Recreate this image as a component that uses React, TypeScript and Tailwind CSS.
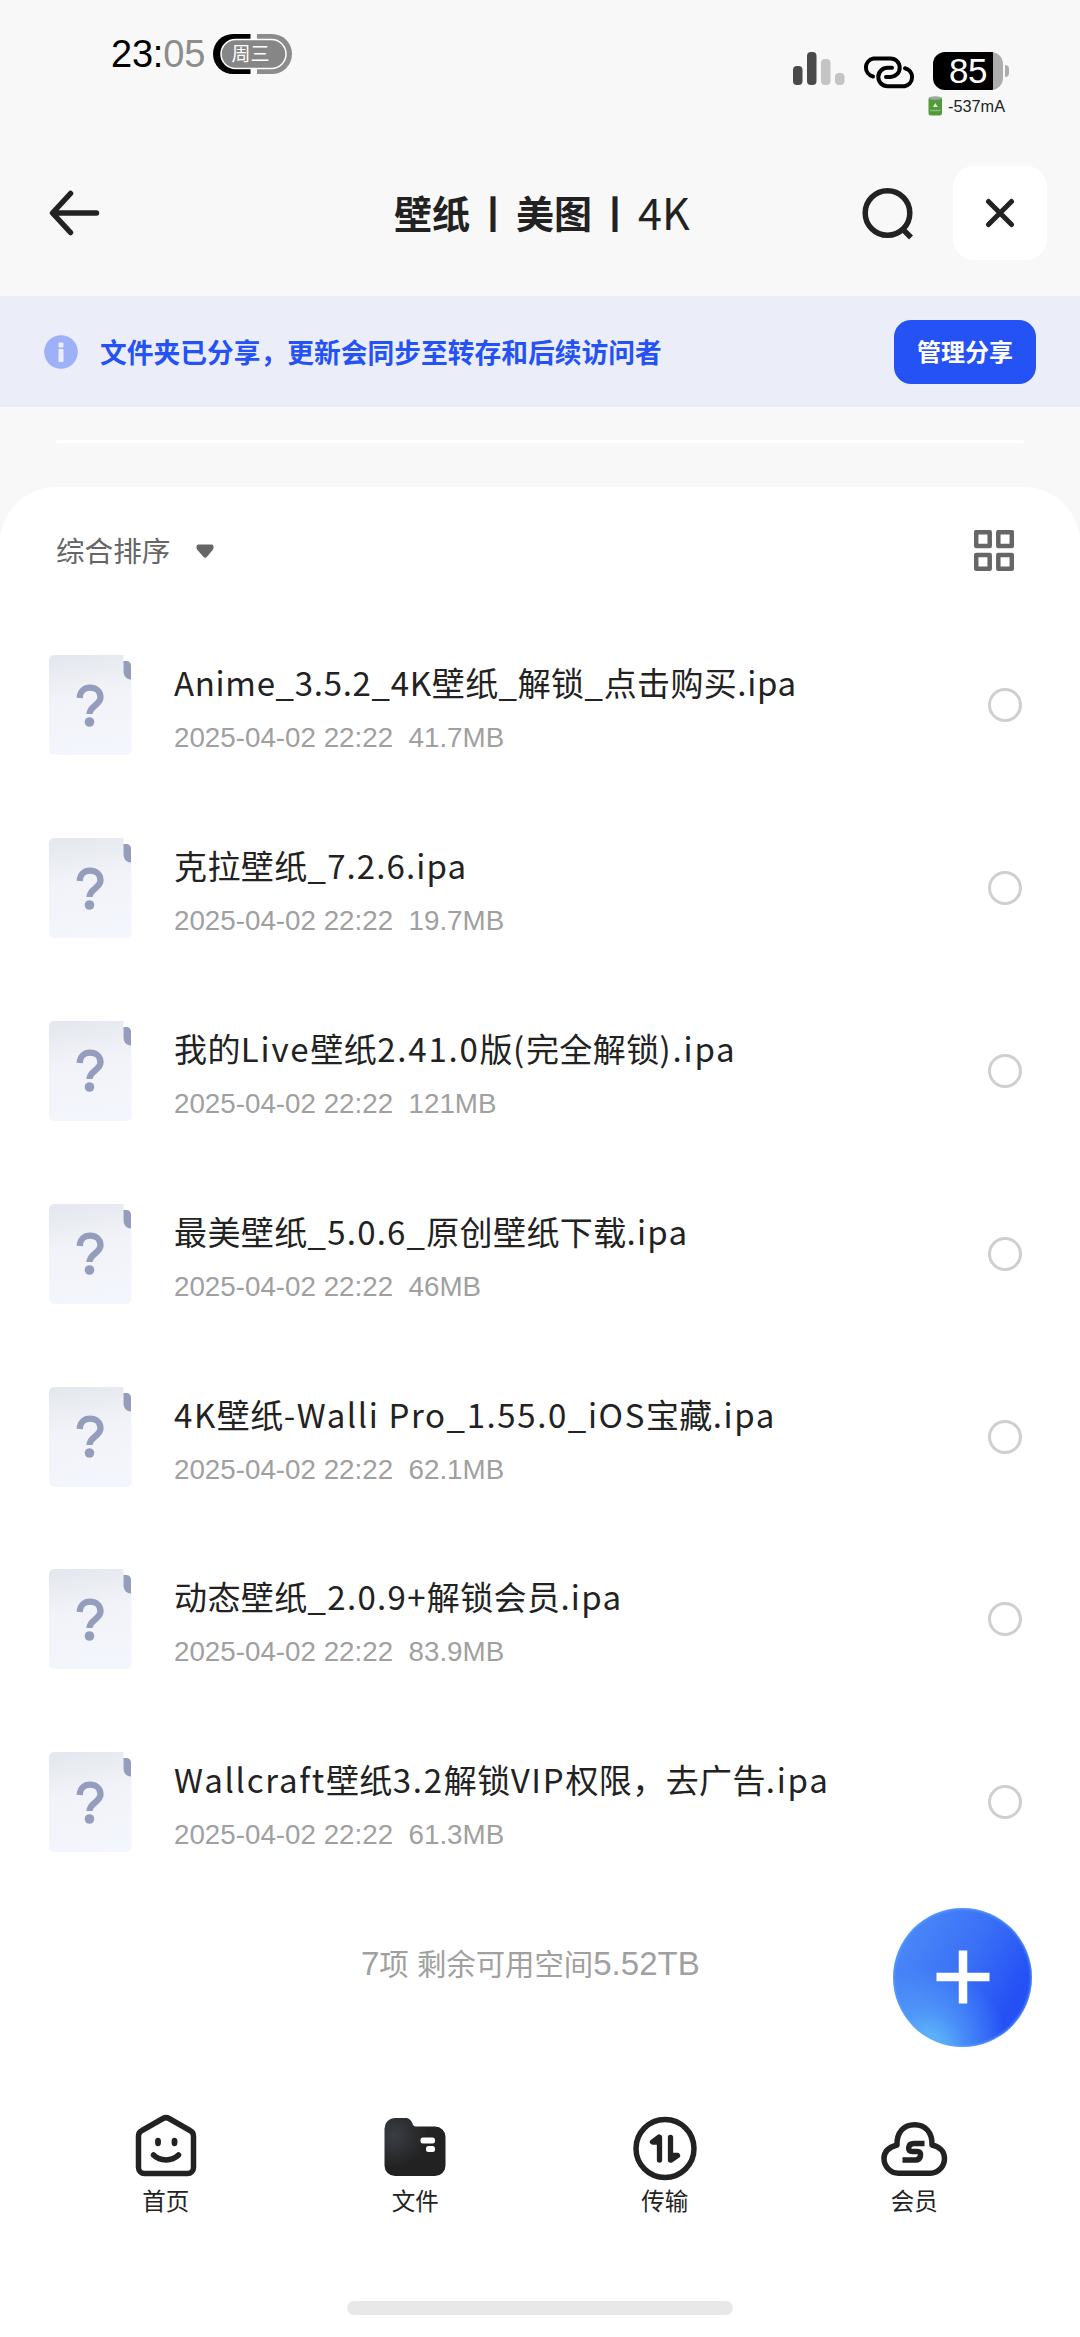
import type { ReactNode } from "react";

type FileItem = {
  name: string;
  date: string;
  size: string;
  tracking: string;
};

const files: FileItem[] = [
  { name: "Anime_3.5.2_4K壁纸_解锁_点击购买.ipa", date: "2025-04-02 22:22", size: "41.7MB", tracking: "tracking-[0.7px]" },
  { name: "克拉壁纸_7.2.6.ipa", date: "2025-04-02 22:22", size: "19.7MB", tracking: "tracking-[1.1px]" },
  { name: "我的Live壁纸2.41.0版(完全解锁).ipa", date: "2025-04-02 22:22", size: "121MB", tracking: "tracking-[1.8px]" },
  { name: "最美壁纸_5.0.6_原创壁纸下载.ipa", date: "2025-04-02 22:22", size: "46MB", tracking: "tracking-[1.2px]" },
  { name: "4K壁纸-Walli Pro_1.55.0_iOS宝藏.ipa", date: "2025-04-02 22:22", size: "62.1MB", tracking: "tracking-[1.6px]" },
  { name: "动态壁纸_2.0.9+解锁会员.ipa", date: "2025-04-02 22:22", size: "83.9MB", tracking: "tracking-[1.3px]" },
  { name: "Wallcraft壁纸3.2解锁VIP权限，去广告.ipa", date: "2025-04-02 22:22", size: "61.3MB", tracking: "tracking-[1.75px]" },
];

function StatusBar() {
  return (
    <div className="flex h-[148px] items-start justify-between pl-[111px] pr-[71px] font-['Liberation_Sans','Noto_Sans_CJK_SC',sans-serif]">
      <div className="flex items-center pt-[34px]">
        <span className="w-[102px] text-[38px] leading-10 tracking-[-0.2px] text-black">
          23:<span className="text-[#8c8c8c]">05</span>
        </span>
        <div className="relative flex h-10 w-[79px] items-center justify-center">
          <svg className="absolute inset-0" width="79" height="40" viewBox="0 0 79 40" fill="none">
            <path d="M37.5 0H20a20 20 0 0 0 0 40h17.5z" fill="#000" />
            <path d="M44 0h15a20 20 0 0 1 0 40H44z" fill="#8c8c8c" />
            <rect x="8" y="5.5" width="65" height="29" rx="14.5" fill="#868686" stroke="#fff" strokeWidth="1.5" />
          </svg>
          <span className="relative pr-1 text-[19px] leading-none text-white">周三</span>
        </div>
      </div>

      <div className="flex items-start pt-[52px]">
        <svg width="54" height="34" viewBox="0 0 54 34">
          <rect x="2" y="14" width="9.5" height="19" rx="4" fill="#4a4a4a" />
          <rect x="16" y="0" width="9.5" height="33" rx="4" fill="#4a4a4a" />
          <rect x="30" y="7" width="9.5" height="26" rx="4" fill="#c4c4c4" />
          <rect x="44" y="21" width="9.5" height="12" rx="4" fill="#c4c4c4" />
        </svg>
        <svg className="ml-[17px] mt-1" width="54" height="33" viewBox="0 0 54 33" fill="none" stroke="#000" strokeWidth="4" strokeLinecap="round">
          <path d="M11 20.500A9.200 9.200 0 0 1 11.500 2.500h17a9.200 9.200 0 0 1 0 18.400h-4.500" />
          <path d="M43 12.200a9.200 9.200 0 0 1-.500 18h-17a9.200 9.200 0 0 1 0-18.400h4.500" />
        </svg>
        <div className="ml-[9px] flex flex-col">
          <div className="flex items-center pl-[8px]">
            <div className="flex h-[38px] w-[70px] items-center justify-center overflow-hidden rounded-[12px] bg-[linear-gradient(90deg,#000_60px,#adadad_60px)] text-[35px] tracking-[-0.5px] text-white">
              85
            </div>
            <div className="ml-0.5 h-3 w-1 rounded-r-full bg-[#adadad]" />
          </div>
          <div className="mt-[6px] flex items-center">
            <svg className="ml-[3px]" width="15" height="20" viewBox="0 0 15 20">
              <rect x="0.500" y="1" width="13.500" height="18.500" rx="2.500" fill="#549a3c" />
              <ellipse cx="7.300" cy="2" rx="6.500" ry="1.700" fill="#9aa9a4" />
              <path d="M2 14.500h10.500" stroke="#86bd72" strokeWidth="1.500" />
              <path d="M7.300 7l2.500 4h-5z" fill="#d9ecd0" />
            </svg>
            <span className="ml-[5px] text-[16.3px] leading-[20px] text-[#222]">-537mA</span>
          </div>
        </div>
      </div>
    </div>
  );
}

function Header() {
  return (
    <header className="flex h-[148px] items-start pl-[49px] pr-[33px] pt-[18px]">
      <div className="flex h-[94px] w-full items-center">
        <svg width="52" height="48" viewBox="0 0 52 48" fill="none" stroke="#222" strokeWidth="5.500" strokeLinecap="round" strokeLinejoin="round">
          <path d="M21.500 4.500L3.500 24l18 19.500M4 24h43.500" />
        </svg>
        <h1 className="mb-[3px] ml-[293px] flex items-center whitespace-nowrap text-[38px] font-bold leading-none text-[#222]">
          <span>壁纸</span>
          <span className="w-[46px] text-center">丨</span>
          <span>美图</span>
          <span className="w-[46px] text-center">丨</span>
          <span className="text-[43px] font-normal">4K</span>
        </h1>
        <svg className="ml-auto mr-[38px]" width="54" height="54" viewBox="0 0 54 54" fill="none" stroke="#222" strokeWidth="5.500">
          <circle cx="26.500" cy="27" r="22.300" />
          <path d="M42 43.500l8 8" />
        </svg>
        <button className="flex size-[94px] items-center justify-center rounded-[21px] bg-white">
          <svg width="30" height="30" viewBox="0 0 30 30" stroke="#222" strokeWidth="5" strokeLinecap="round">
            <path d="M3.500 3.500l23 23M26.500 3.500l-23 23" />
          </svg>
        </button>
      </div>
    </header>
  );
}

function ShareBanner() {
  return (
    <div className="flex h-[111px] items-center bg-[#ebeef9] pl-[44px] pr-[44px]">
      <svg width="34" height="34" viewBox="0 0 34 34">
        <circle cx="17" cy="17" r="16.800" fill="#9db0f8" />
        <rect x="14.500" y="7.500" width="5" height="5" rx="1" fill="#ebeef9" />
        <rect x="14.500" y="14" width="5" height="13" rx="1" fill="#ebeef9" />
      </svg>
      <p className="ml-[22px] pt-px text-[26.75px] font-bold leading-none text-[#2452f5]">
        文件夹已分享，更新会同步至转存和后续访问者
      </p>
      <button className="ml-auto flex h-[64px] w-[142px] items-center justify-center rounded-[17px] bg-[#2452f5] pb-0.5 text-[24px] font-bold leading-none text-white">
        管理分享
      </button>
    </div>
  );
}

function FileIcon() {
  return (
    <div className="relative flex h-[100px] w-[83px] shrink-0 items-center justify-center">
      <svg className="absolute inset-0" width="83" height="100" viewBox="0 0 83 100">
        <defs>
          <linearGradient id="paper" x1="0.400" y1="0" x2="0.550" y2="1">
            <stop offset="0" stopColor="#e5e8ee" />
            <stop offset="0.400" stopColor="#f1f3f8" />
            <stop offset="1" stopColor="#f4f6fd" />
          </linearGradient>
        </defs>
        <path d="M5 0h69.500v16c0 5 3 8 8 8.500V95a5 5 0 0 1-5 5H5a5 5 0 0 1-5-5V5a5 5 0 0 1 5-5z" fill="url(#paper)" />
        <path d="M74.500 6h3a4.500 4.500 0 0 1 4.500 4.500v14c-5-.500-7.500-3.500-7.500-8.500z" fill="#949dbc" />
      </svg>
      <svg className="relative mr-0.5" width="28" height="43" viewBox="0 0 28 43" fill="none">
        <path d="M3.700 14C4 7 8.500 3.700 14 3.700s10.500 3.300 10.500 9.600c0 7.700-11 8.700-11 16.700" stroke="#949dbc" strokeWidth="6.300" />
        <circle cx="13.500" cy="38" r="4.800" fill="#949dbc" />
      </svg>
    </div>
  );
}

// Latin runs are set looser than the CJK glyphs around them
function FileName({ name, tracking }: { name: string; tracking: string }) {
  return (
    <p className="whitespace-pre text-[33px] leading-[44px] tracking-[0.4px] text-[#222]">
      {name.split(/([\x20-\x7e]+)/).map((part, i) => (
        <span key={i} className={i % 2 ? tracking : ""}>
          {part}
        </span>
      ))}
    </p>
  );
}

function FileRow({ file }: { file: FileItem }) {
  return (
    <li className="flex h-[182.8px] items-center pl-[49px] pr-[58px]">
      <FileIcon />
      <div className="ml-[42px] flex flex-col pt-[5px]">
        <FileName name={file.name} tracking={file.tracking} />
        <p className="mt-[17px] whitespace-pre font-['Liberation_Sans',sans-serif] text-[27.75px] leading-[34px] text-[#a0a0a0]">
          {file.date}  {file.size}
        </p>
      </div>
      <span className="ml-auto size-[34px] rounded-full border-3 border-[#cfcfcf]" />
    </li>
  );
}

function NavItem({ label, children }: { label: string; children: ReactNode }) {
  return (
    <a className="flex flex-1 flex-col items-center text-[#222]">
      <svg className="overflow-visible" width="68" height="68" viewBox="0 0 68 68" fill="none">
        {children}
      </svg>
      <span className="mt-[5.5px] text-[23.5px] leading-[30px]">{label}</span>
    </a>
  );
}

function TabBar() {
  return (
    <nav className="flex px-[41px]">
      <NavItem label="首页">
        <path
          d="M31 6.500a6 6 0 0 1 6 0L58 18.500a6 6 0 0 1 3.500 5.500v31.500a6 6 0 0 1-6 6h-43a6 6 0 0 1-6-6V24A6 6 0 0 1 10 18.500z"
          stroke="#222"
          strokeWidth="5.500"
        />
        <path d="M21.500 43c6.500 6.500 18.500 6.500 25 0" stroke="#222" strokeWidth="5.500" strokeLinecap="round" />
        <ellipse cx="26" cy="30" rx="3" ry="4.200" fill="#222" />
        <ellipse cx="42.500" cy="30" rx="3" ry="4.200" fill="#222" />
      </NavItem>
      <NavItem label="文件">
        <defs>
          <radialGradient id="folder" cx="0.150" cy="0.300" r="0.550">
            <stop offset="0" stopColor="#3a3e45" />
            <stop offset="1" stopColor="#222" />
          </radialGradient>
        </defs>
        <path
          d="M3.500 16.500A10.500 10.500 0 0 1 14 6h10c4 0 6 2 7.500 5.500.800 2.200 1.500 3 3.500 3h19A10.500 10.500 0 0 1 64.500 25v28.500A10.500 10.500 0 0 1 54 64H14A10.500 10.500 0 0 1 3.500 53.500z"
          fill="url(#folder)"
        />
        <rect x="39.500" y="25.500" width="14.500" height="6" rx="2.500" fill="#fff" />
        <rect x="45" y="34" width="9" height="6" rx="2.500" fill="#fff" />
      </NavItem>
      <NavItem label="传输">
        <circle cx="34" cy="36.500" r="29" stroke="#222" strokeWidth="5.500" />
        <path
          d="M28.500 25.500v22.500M28 25l-6.500 5h6M39.500 25.500v22.500M40 48l6.500-4.500h-6"
          stroke="#222"
          strokeWidth="5.300"
          strokeLinecap="round"
          strokeLinejoin="round"
        />
      </NavItem>
      <NavItem label="会员">
        <path
          d="M17 33C16.500 20 24 12.700 34.500 12.700S52.500 20 52 33C59 34.500 64.500 39 64.500 46.500S58.500 61.200 50.500 61.200h-32C10.500 61.200 4 54.500 4 46.500S9.500 35 17 33z"
          stroke="#222"
          strokeWidth="5.500"
          strokeLinejoin="round"
        />
        <path d="M44.500 31.500H34c-3.500 0-5 1.200-5.300 4-.300 2.800.800 4 3.800 4h4.500c3 0 3.900 1.200 3.500 4-.400 2.900-1.900 4.500-5 4.500H22.500" stroke="#222" strokeWidth="5.500" />
      </NavItem>
    </nav>
  );
}

export default function App() {
  return (
    <main className="flex h-[2337px] w-[1080px] flex-col overflow-hidden bg-[#f8f8f8] font-['Noto_Sans_CJK_SC',sans-serif]">
      <StatusBar />
      <Header />
      <ShareBanner />
      <div className="mx-[56px] mt-[33px] h-[3px] rounded-full bg-white" />

      <section className="mt-[44px] flex grow flex-col rounded-t-[56px] bg-white">
        <div className="flex h-[127px] items-center pl-[56px] pr-[66px]">
          <span className="text-[28.6px] leading-none text-[#666]">综合排序</span>
          <svg className="ml-[26px]" width="18" height="14" viewBox="0 0 18 14" fill="#666">
            <path d="M2.500 0.500h13a2 2 0 0 1 2 2v1.500a3 3 0 0 1-.700 1.800l-6 7.200a2 2 0 0 1-3.200 0L1.200 5.800A3 3 0 0 1 .500 4V2.500a2 2 0 0 1 2-2z" />
          </svg>
          <svg className="ml-auto" width="40" height="41" viewBox="0 0 40 41" fill="none" stroke="#666" strokeWidth="4.500" strokeLinejoin="round">
            <rect x="2.200" y="2.200" width="13.500" height="13.700" />
            <rect x="24.300" y="2.200" width="13.500" height="13.700" />
            <rect x="2.200" y="25" width="13.500" height="13.700" />
            <rect x="24.300" y="25" width="13.500" height="13.700" />
          </svg>
        </div>

        <ul>
          {files.map((file) => (
            <FileRow key={file.name} file={file} />
          ))}
        </ul>

        <div className="flex h-[218.4px] items-start pl-[361px] pr-[48px] pt-[14px]">
          <p className="mt-[36px] whitespace-pre font-['Liberation_Sans','Noto_Sans_CJK_SC',sans-serif] text-[33px] leading-[40px] text-[#a0a0a0]">
            7<span className="text-[29.4px]">项 剩余可用空间</span>5.52TB
          </p>
          <button className="ml-auto flex size-[139px] items-center justify-center rounded-full bg-[radial-gradient(circle_at_25%_102%,#6ccffbe6_0%,#5fb4fb80_22%,#4b8cf800_46%),linear-gradient(118deg,#4a88f7_12%,#3a70f6_48%,#2450f5_80%)] shadow-[inset_0_0_3px_1px_#5ba4fb]">
            <svg width="54" height="54" viewBox="0 0 54 54" stroke="#fff" strokeWidth="8.500">
              <path d="M27 .500v53M.500 27h53" />
            </svg>
          </button>
        </div>

        <TabBar />
        <div className="mx-auto mb-[22px] mt-auto h-[14px] w-[386px] rounded-full bg-[#e8e8e8]" />
      </section>
    </main>
  );
}
